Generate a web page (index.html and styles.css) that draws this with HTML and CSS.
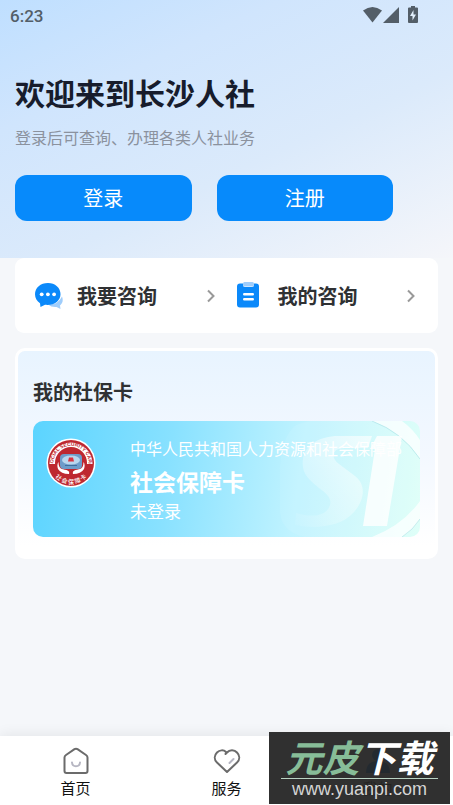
FILE: index.html
```html
<!DOCTYPE html>
<html lang="zh-CN">
<head>
<meta charset="utf-8">
<meta name="viewport" content="width=device-width, initial-scale=1">
<title>长沙人社</title>
<link rel="stylesheet" href="styles.css">
</head>
<body>
<header class="hero">
  <div class="status">
    <span class="clock">6:23</span>
    <svg class="status-icons" width="58" height="20" viewBox="0 0 58 20" fill="#535e68" aria-hidden="true">
      <path d="M1 5.500Q10.500-1.500 20 5.500L10.500 17.500Z"/>
      <path d="M37 2v16H21Z"/>
      <path d="M49 1h4v1.500h2q1 0 1 1V17q0 1-1 1h-8q-1 0-1-1V3.500q0-1 1-1h2Z"/>
      <path d="m51.500 5-3.500 6h2.500v4.500l3.500-6h-2.500Z" fill="#e2effc"/>
    </svg>
  </div>
  <h1 class="welcome">欢迎来到长沙人社</h1>
  <p class="hint">登录后可查询、办理各类人社业务</p>
  <div class="actions">
    <button class="action" type="button">登录</button>
    <button class="action" type="button">注册</button>
  </div>
</header>

<main class="content">
  <nav class="consult" aria-label="咨询">
    <a class="consult-link" href="#ask">
      <svg class="consult-icon" width="28" height="28" viewBox="0 0 28 28" aria-hidden="true">
        <path d="M27 14.500c1.500 4 .5 7-2 9l.500 3.500-4-2q-5 .5-8.500-2.500Q23 23 27 14.500Z" fill="#9fcdfb"/>
        <path d="M13 1C5.500 1 0 5.800 0 12.200c0 4 2 7 5 9L5.500 25l4.500-2.200c9 1 15.500-4 15.500-10.600C25.500 5.800 20 1 13 1Z" fill="#0b89fa"/>
        <g fill="#fff"><circle cx="6.700" cy="12.300" r="1.900"/><circle cx="12.900" cy="12.300" r="1.900"/><circle cx="19.100" cy="12.300" r="1.900"/></g>
      </svg>
      <span class="consult-label">我要咨询</span>
      <svg class="chevron" width="10" height="14" viewBox="0 0 10 14" aria-hidden="true"><path d="m2 1.500 5.500 5.500L2 12.500"/></svg>
    </a>
    <a class="consult-link" href="#mine">
      <svg class="consult-icon" width="28" height="28" viewBox="0 0 28 28" aria-hidden="true">
        <path d="M4 1.500h3V3q0 2 2 2h7q2 0 2-2V1.500h2q3 0 3 3v18q0 3-3 3H4q-3 0-3-3v-18q0-3 3-3Z" fill="#0b89fa"/>
        <rect x="7" y="0" width="11" height="4.500" rx="1.500" fill="#9fcdfb"/>
        <path d="M8.200 12.300h8.600M8.200 17.300h8.600" stroke="#fff" stroke-width="2.400" stroke-linecap="round"/>
      </svg>
      <span class="consult-label">我的咨询</span>
      <svg class="chevron" width="10" height="14" viewBox="0 0 10 14" aria-hidden="true"><path d="m2 1.500 5.500 5.500L2 12.500"/></svg>
    </a>
  </nav>

  <section class="panel">
    <h2 class="panel-title">我的社保卡</h2>
    <div class="card">
      <svg class="card-art" width="140" height="116" viewBox="0 0 140 116" aria-hidden="true">
        <defs>
          <linearGradient id="fade" x1="0" x2="1" y1="1" y2="0">
            <stop offset="0" stop-color="#fff" stop-opacity=".05"/>
            <stop offset=".5" stop-color="#fff" stop-opacity=".35"/>
            <stop offset="1" stop-color="#fff" stop-opacity=".65"/>
          </linearGradient>
        </defs>
        <path d="M16 4Q42-6 76 0h16q31 12 48 38v42q-17 26-48 36H25Q2 111 0 92V45Q2 15 16 4Z" fill="#fff" opacity=".08"/>
        <path d="M92 0h30q11 8 18 19v19Q122 11 92 0ZM140 80v18q-7 11-18 18H92q31-12 48-36Z" fill="#fff" opacity=".75"/>
        <path d="M92 0q30 11 48 38M140 98q-7 11-18 18" fill="none" stroke="#8fd4dc" stroke-width=".6" opacity=".7"/>
        <path d="M92 15 88 27H65C52 27 50 36 59 43l16 12c14 11 7 29-4 39-10 10-33 15-56 10l1-12c16 5 31 3 34-8 2-7-4-12-11-17C28 58 21 52 23 38c2-14 17-23 35-23Z" fill="url(#fade)"/>
        <path d="M97 15h25l-15 90H83L95 28h-5Z" fill="#fff" opacity=".8"/>
      </svg>
      <svg class="emblem" width="50" height="50" viewBox="0 0 50 50" role="img" aria-label="社会保障卡徽标">
        <defs>
          <path id="arc-top" d="M8.300 31A17.600 17.600 0 1 1 41.700 31"/>
          <path id="arc-bottom" d="M5 32.500A21.600 21.600 0 0 0 45 32.500"/>
        </defs>
        <circle cx="25" cy="25" r="24.500" fill="#fff"/>
        <circle cx="25" cy="25" r="23" fill="#be2830"/>
        <path d="M3.500 26A21.500 21.500 0 1 1 46.500 26Z" fill="#fff"/>
        <circle cx="25" cy="25" r="16" fill="#be2830"/>
        <rect x="14" y="16" width="22" height="15" rx="4" fill="#6d9cc9"/>
        <ellipse cx="25" cy="22" rx="9" ry="4.500" fill="#b9d7ee"/>
        <path d="M23 19.500h4l1 4h-6Z" fill="#d93340"/>
        <path d="M19 27.500h12" stroke="#3e6f9e"/>
        <path d="M12.500 24c0 7 3 7 8 8q3.500 1 2.500 4-8 0-11-5-1.500-4 .5-7ZM37.500 24c0 7-3 7-8 8q-3.500 1-2.500 4 8 0 11-5 1.500-4-.5-7Z" fill="#fff"/>
        <text class="emblem-en"><textPath href="#arc-top" startOffset="50%">SOCIAL SECURITY CARD</textPath></text>
        <text class="emblem-cn"><textPath href="#arc-bottom" startOffset="50%">社 会 保 障 卡</textPath></text>
      </svg>
      <div class="card-info">
        <p class="issuer">中华人民共和国人力资源和社会保障部</p>
        <p class="card-name">社会保障卡</p>
        <p class="card-state">未登录</p>
      </div>
    </div>
  </section>
</main>

<footer class="dock">
  <nav class="tabs" aria-label="主导航">
    <a class="tab" href="#home">
      <svg width="28" height="28" viewBox="0 0 28 28" fill="none" stroke-linecap="round" stroke-linejoin="round" aria-hidden="true">
        <path d="M2.500 10.500Q2.500 9 4 8l8.500-5.800q1.500-1 3 0L24 8q1.500 1 1.500 2.500V24q0 2-2 2h-19q-2 0-2-2Z" stroke="#6b6b6b" stroke-width="2"/>
        <path d="M10 15.500c.5 5 7.500 5 8 0" stroke="#b6b6c2" stroke-width="2"/>
      </svg>
      <span>首页</span>
    </a>
    <a class="tab" href="#service">
      <svg width="28" height="28" viewBox="0 0 28 28" fill="none" stroke-linecap="round" stroke-linejoin="round" aria-hidden="true">
        <path d="M12.500 7 14 5.500c2.500-3 7.500-3 10 0 3 3 3 7 0 10L14 25 4 15.500c-3-3-3-7 0-10C6.500 3 10.500 2.500 13 5" stroke="#6b6b6b" stroke-width="2"/>
        <path d="m16.500 16 4-4" stroke="#b6b6c2" stroke-width="2"/>
      </svg>
      <span>服务</span>
    </a>
    <a class="tab" href="#me">
      <svg width="28" height="28" viewBox="0 0 28 28" fill="#0b89fa" aria-hidden="true">
        <circle cx="14" cy="8" r="6"/><path d="M2 26q0-12 12-12t12 12Z"/>
      </svg>
      <span>我的</span>
    </a>
  </nav>
  <div class="stamp">
    <div class="stamp-name"><span class="stamp-green">元皮</span>下载</div>
    <div class="stamp-url">www.yuanpi.com</div>
  </div>
</footer>
</body>
</html>
```

FILE: styles.css
```css
* {
  box-sizing: border-box;
}

body {
  margin: 0;
  min-height: 100vh;
  display: flex;
  flex-direction: column;
  background: #f5f7fa;
  color: #2f3133;
  font-family: "Noto Sans CJK SC", sans-serif;
}

h1, h2, p {
  margin: 0;
}

a {
  color: inherit;
  text-decoration: none;
}

/* Header */
.hero {
  padding: 0 15px 37px;
  background: linear-gradient(155deg, #bfdfff 0%, #d0e5fd 28%, #dbeafb 60%, #f5f6fa 100%);
}

.status {
  display: flex;
  justify-content: space-between;
  align-items: center;
  height: 32px;
  margin: 0 18px 0 -5px;
}

.clock {
  color: #535e68;
  font: 500 17px/20px Roboto, sans-serif;
}

.status-icons {
  margin-bottom: 3px;
}

.welcome {
  margin-top: 38px;
  color: #171c2c;
  font-size: 30px;
  font-weight: 700;
  line-height: 44px;
}

.hint {
  margin-top: 11px;
  color: #8b929e;
  font-size: 16px;
  line-height: 24px;
}

.actions {
  display: grid;
  grid-template-columns: 1fr 1fr;
  gap: 25px;
  margin: 26px 45px 0 0;
}

.action {
  height: 46px;
  padding: 0 0 2px;
  border: 0;
  border-radius: 12px;
  background: #078afb;
  color: #fff;
  font-family: inherit;
  font-size: 20px;
}

/* Cards */
.content {
  flex: 1;
  padding: 0 15px 32px;
}

.consult {
  display: grid;
  grid-template-columns: 1fr 1fr;
  gap: 20px;
  padding: 0 22px 0 20px;
  border-radius: 9px;
  background: #fff;
}

.consult-link {
  display: flex;
  align-items: center;
  height: 75px;
  font-size: 20px;
  font-weight: 700;
}

.consult-icon {
  margin-right: 14px;
}

.chevron {
  margin-left: auto;
  fill: none;
  stroke: #999;
  stroke-width: 2;
}

.panel {
  margin-top: 15px;
  padding: 26px 15px 19px;
  border: 3px solid #fff;
  border-radius: 10px;
  background: linear-gradient(#e8f4ff, #f3f8ff 50%, #fff 95%);
}

.panel-title {
  margin-bottom: 14px;
  font-size: 20px;
  font-weight: 700;
  line-height: 30px;
}

.card {
  position: relative;
  display: flex;
  align-items: flex-start;
  gap: 34px;
  padding: 15px 12px 14px 13px;
  border-radius: 10px;
  overflow: hidden;
  background: linear-gradient(98deg, #5bd4ff 0%, #88e1ff 35%, #c0f3ff 68%, #dffff8 100%);
  color: #fff;
}

.card-art {
  position: absolute;
  top: 0;
  right: 0;
}

.emblem {
  flex: none;
  margin-top: 2px;
}

.emblem-en {
  fill: #be2830;
  font: 700 5px "Liberation Sans", sans-serif;
  text-anchor: middle;
}

.emblem-cn {
  fill: #fff;
  font: 500 6px "Noto Sans CJK SC", sans-serif;
  text-anchor: middle;
}

.card-info {
  position: relative;
  white-space: nowrap;
}

.issuer {
  font-size: 16px;
  line-height: 24px;
}

.card-name {
  margin-top: 5px;
  font-size: 23px;
  font-weight: 700;
  line-height: 32px;
}

.card-state {
  margin-top: 1px;
  font-size: 17px;
  line-height: 25px;
}

/* Bottom bar */
.dock {
  position: relative;
}

.tabs {
  display: grid;
  grid-template-columns: repeat(3, 1fr);
  background: #fff;
  box-shadow: 0 0 14px rgba(0, 0, 0, .09);
}

.tab {
  display: flex;
  flex-direction: column;
  align-items: center;
  padding: 11px 0 5px;
  color: #111;
  font-size: 15px;
  line-height: 24px;
}

.tab svg {
  margin-bottom: 1px;
}

.stamp {
  position: absolute;
  right: 3px;
  bottom: 1px;
  width: 181px;
  height: 72px;
  padding: 6px 12px 0;
  background: rgba(37, 37, 37, .95);
  color: #fff;
  text-align: center;
}

.stamp-name {
  height: 41px;
  border-bottom: 1px solid #b9d2c3;
  font-size: 37px;
  font-style: italic;
  font-weight: 700;
  line-height: 37px;
}

.stamp-green {
  color: #87bd98;
}

.stamp-url {
  color: #d5d5d5;
  font: 18px/20px "Liberation Sans", sans-serif;
}
```
